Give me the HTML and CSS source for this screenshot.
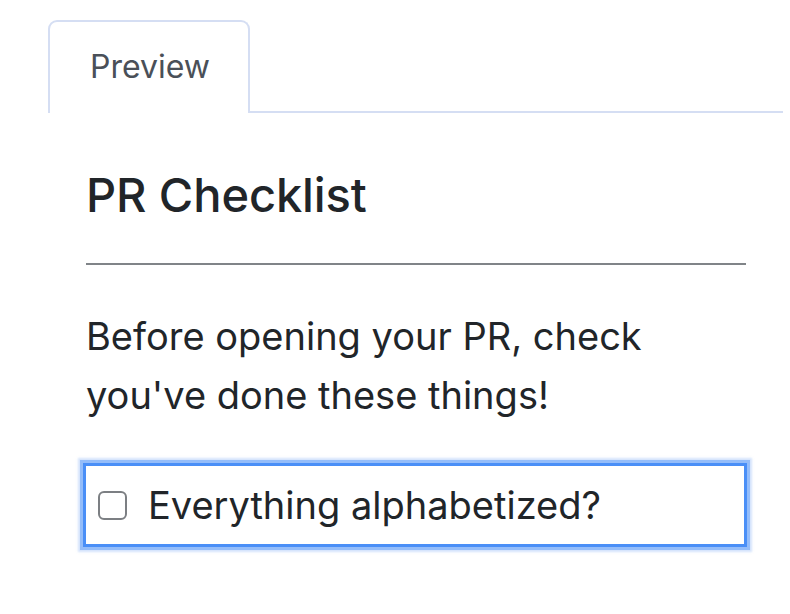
FILE: index.html
```html
<!DOCTYPE html>
<html lang="en">
<head>
<meta charset="utf-8">
<title>PR Checklist Preview</title>
<link rel="stylesheet" href="styles.css">
</head>
<body>
  <div class="tabs">
    <div class="tab">Preview</div>
    <div class="tabs-fill"></div>
  </div>
  <main class="content">
    <h2 class="title">PR Checklist</h2>
    <hr class="rule">
    <p class="lead">Before opening your PR, check you've done these things!</p>
    <label class="check-row">
      <span class="check-box"></span>
      <span class="check-label">Everything alphabetized?</span>
    </label>
  </main>
</body>
</html>
```
FILE: styles.css
```css
html, body {
  margin: 0;
  padding: 0;
  background: #ffffff;
}
body {
  font-family: "Inter", "Liberation Sans", sans-serif;
  color: #212529;
  width: 790px;
}
.tabs {
  display: flex;
  margin: 20px 7px 0 48px;
  height: 93px;
}
.tab {
  box-sizing: border-box;
  width: 202px;
  height: 93px;
  border: 2px solid #d5def3;
  border-bottom: none;
  border-radius: 9px 9px 0 0;
  display: flex;
  align-items: center;
  justify-content: center;
  padding-bottom: 2px;
  padding-left: 2px;
  font-size: 32px;
  color: #4a5058;
  background: #fff;
}
.tabs-fill {
  flex: 1;
  border-bottom: 2px solid #d5def3;
}
.content {
  padding: 0 44px 40px 86px;
  display: flex;
  flex-direction: column;
}
.title {
  margin: 54px 0 0 0;
  font-size: 47px;
  line-height: 56px;
  font-weight: 500;
  letter-spacing: -0.1px;
}
.rule {
  margin: 40px 0 0 0;
  border: none;
  border-top: 2px solid #808488;
  height: 0;
}
.lead {
  margin: 42px 0 0 0;
  font-size: 38px;
  line-height: 59px;
  width: 600px;
}
.check-row {
  box-sizing: border-box;
  margin: 38px 0 0 -3px;
  width: 664px;
  height: 84px;
  border: 3px solid #4a8ff7;
  box-shadow: 0 0 0 3px #94bdfa, 0 0 2px 5px rgba(170, 200, 250, 0.5);
  display: flex;
  align-items: center;
  gap: 21px;
  padding-left: 12px;
}
.check-box {
  box-sizing: border-box;
  width: 29px;
  height: 29px;
  border: 2px solid #7c7f83;
  border-radius: 6px;
  background: #fff;
  flex: none;
}
.check-label {
  font-size: 38px;
  line-height: 1;
}
```
